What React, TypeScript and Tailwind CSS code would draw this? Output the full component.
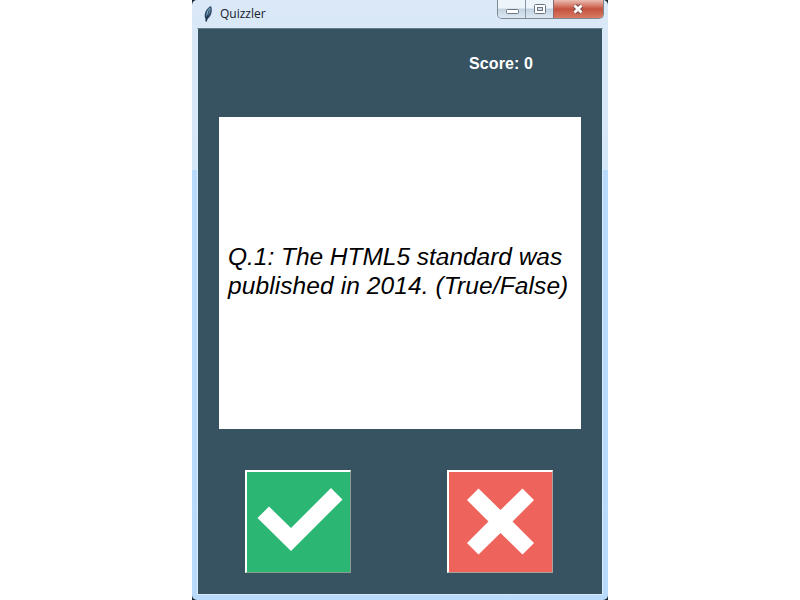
function FeatherIcon() {
  return (
    <svg className="ml-1 mt-[5px] h-[18px] w-3 shrink-0" viewBox="0 0 12 18">
      <path d="M4.6 16.8 4.4 13.8C2.4 10 4.8 3.2 10 1 11.6 4.5 11 10.5 6.8 13.8L5.6 16.8Z" fill="#2c4763" />
      <path d="M5.6 11.4C5 7.5 6.4 4 9.4 2.4 9.8 6 8.8 9.4 5.6 11.4Z" fill="#7fa9c6" />
      <path d="M5.1 16 8.4 4.6" stroke="#16283b" strokeWidth=".8" fill="none" />
    </svg>
  );
}

function TitleBar() {
  return (
    <header className="flex h-7 shrink-0 items-start">
      <FeatherIcon />
      <span className="ml-[7px] mt-1 font-['Open_Sans','Noto_Sans',sans-serif] text-[12px] leading-5 text-[#17202b]">
        Quizzler
      </span>
      <div className="-mr-px ml-auto flex h-[19px] w-[107px] overflow-hidden rounded-b-[5px] border border-t-0 border-[#7d8995]">
        <button aria-label="Minimize" className="h-full w-7 border-r border-[#8795a4] bg-linear-to-b from-[#edf4fa] from-45% via-[#c3d1df] via-50% to-[#dce9f4]">
          <svg className="h-[18px] w-7" viewBox="0 0 28 18">
            <rect x="8.5" y="9.5" width="12" height="4" rx="1" fill="#fff" stroke="#697583" />
          </svg>
        </button>
        <button aria-label="Maximize" className="h-full w-7 border-r border-[#8d6870] bg-linear-to-b from-[#edf4fa] from-45% via-[#c3d1df] via-50% to-[#dce9f4]">
          <svg className="h-[18px] w-7" viewBox="0 0 28 18">
            <rect x="8.5" y="4.5" width="11" height="9" rx="1" fill="#fff" stroke="#697583" />
            <rect x="11.5" y="7.5" width="5" height="3" fill="#d2dce6" stroke="#697583" />
          </svg>
        </button>
        <button aria-label="Close" className="h-full flex-1 bg-linear-to-b from-[#eabdb2] from-0% via-[#c4513f] via-50% to-[#d97b62]">
          <svg className="h-[18px] w-[49px]" viewBox="0 0 49 18">
            <path d="M20.5 5.5 27.5 12.5M27.5 5.5 20.5 12.5" stroke="#7b4a4a" strokeWidth="4.8" />
            <path d="M20.5 5.5 27.5 12.5M27.5 5.5 20.5 12.5" stroke="#fff" strokeWidth="2.8" />
          </svg>
        </button>
      </div>
    </header>
  );
}

export default function App() {
  return (
    <main className="flex h-[600px] w-[800px] justify-center overflow-hidden bg-white">
      <div className="w-[416px] bg-[#1c2630]">
        <div className="flex h-[600px] flex-col rounded-[5px] bg-linear-to-b from-[#dae8f7] from-0% via-[#d5e8f8] via-[170px] to-[#b9dafa] to-[170px] px-[5px] pb-[5px]">
          <TitleBar />
          <section className="flex h-[567px] flex-col border border-[#d8ecfb] border-t-[#617b8b] bg-[#375362]">
            <div className="flex h-[88px] shrink-0 pl-[271px] pt-6">
              <p className="whitespace-nowrap font-['Liberation_Sans',Arial,sans-serif] text-[16px] font-bold leading-[22px] tracking-[0.12px] text-white">
                Score: 0
              </p>
            </div>
            <div className="ml-[21px] flex h-[312px] w-[362px] shrink-0 items-center bg-white pb-[5px] pl-[9px] font-['Liberation_Sans',Arial,sans-serif] text-[24.5px] italic leading-[29px] text-black">
              <p className="whitespace-nowrap">
                <span className="tracking-[-0.03px]">Q.1: The HTML5 standard was</span>
                <br />
                <span className="tracking-[0.1px]">published in 2014. (True/False)</span>
              </p>
            </div>
            <div className="mt-[41px] flex gap-24 pl-[47px]">
              <button aria-label="True" className="h-[103px] w-[106px] border-l-2 border-t-2 border-r border-b border-l-white border-t-white border-r-[#8b9c91] border-b-[#8b9c91] bg-[#2bb673]">
                <svg className="h-[100px] w-[103px]" viewBox="0 0 103 100">
                  <path d="M10.5 46 22 34.5 44 56 84 16 95.5 27.5 44 79Z" fill="#fff" />
                </svg>
              </button>
              <button aria-label="False" className="h-[103px] w-[106px] border-l-2 border-t-2 border-r border-b border-l-white border-t-white border-r-[#aaa19c] border-b-[#aaa19c] bg-[#ee635c]">
                <svg className="h-[100px] w-[103px]" viewBox="0 0 103 100">
                  <path d="M18 28 29.5 16.5 51.5 38 73.5 16.5 85 28 63.5 49.5 85 71 73.5 82.5 51.5 61 29.5 82.5 18 71 39.5 49.5Z" fill="#fff" />
                </svg>
              </button>
            </div>
          </section>
        </div>
      </div>
    </main>
  );
}
